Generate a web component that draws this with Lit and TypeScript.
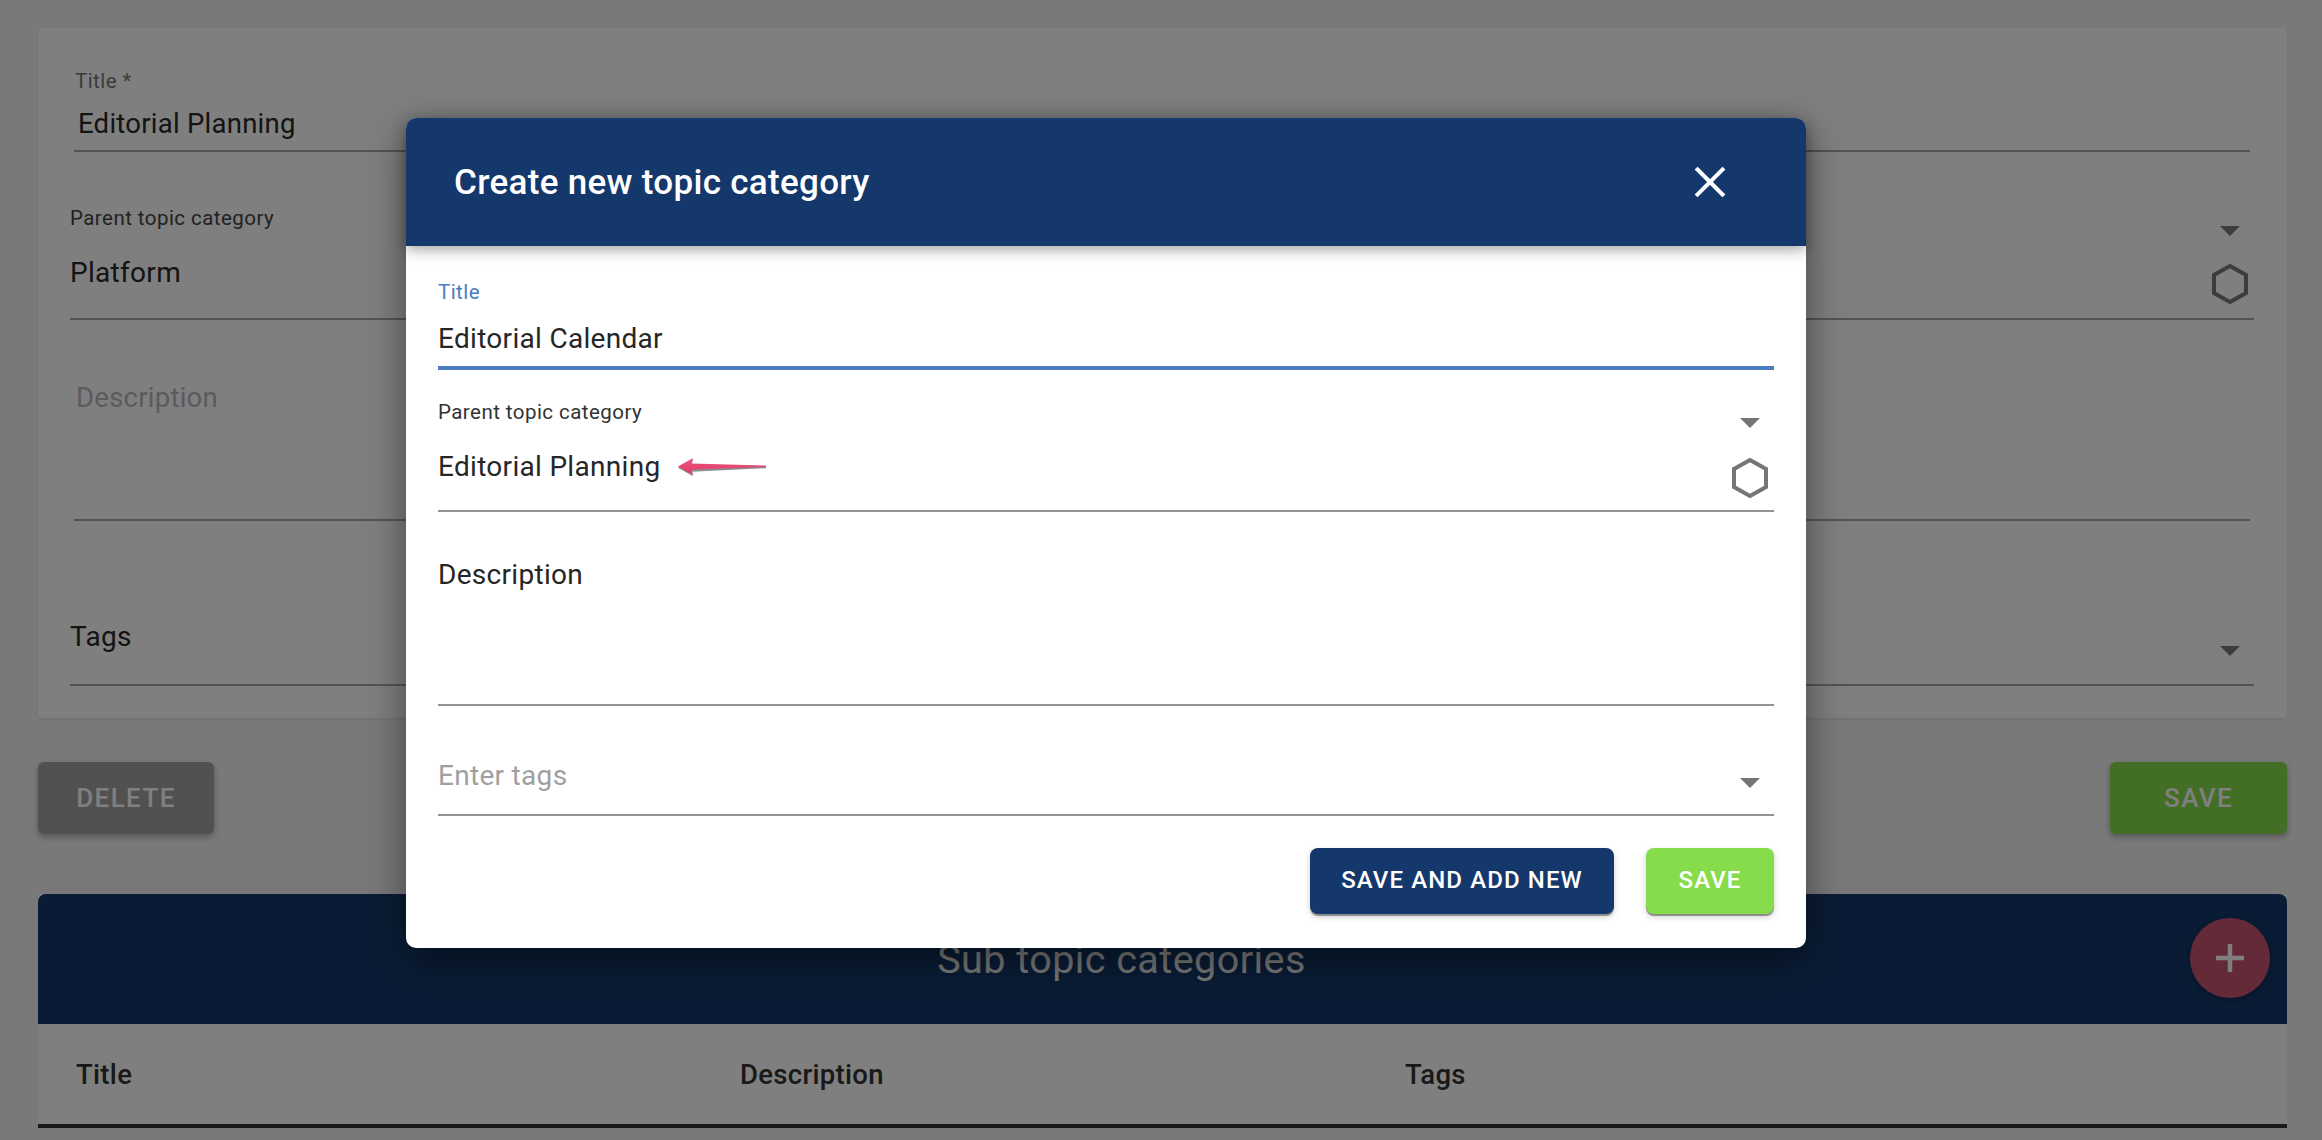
import { LitElement, html, css } from "lit";
import { customElement } from "lit/decorators.js";

const tri = () => html`<svg class="tri" viewBox="0 0 20 10"><path d="M0 0H20L10 10Z" fill="currentColor"/></svg>`;
const hex = () => html`<svg class="hex" viewBox="0 0 36 40"><path d="M18 2 L34 11 V29 L18 38 L2 29 V11 Z" fill="none" stroke="currentColor" stroke-width="4"/></svg>`;

@customElement("app-root")
export class AppRoot extends LitElement {
  static styles = css`
    :host { display: block; font-family: Roboto, "Liberation Sans", sans-serif; }
    * { box-sizing: border-box; }
    .page { position: relative; width: 2322px; height: 1140px; overflow: hidden; background: #f3f3f3; padding: 28px 35px 0 38px; }
    .paper { height: 690px; background: #fff; border-radius: 4px; box-shadow: 0 1px 3px rgba(0,0,0,.1); display: flex; flex-direction: column; }
    .bf { border-bottom: 2px solid #a8a8a8; display: flex; color: #282828; }
    .bf.a { margin: 0 37px 0 36px; }
    .bf.b { margin: 0 33px 0 32px; }
    .bf .grow, .mf .grow { flex: 1; min-width: 0; }
    .icons { width: 36px; display: flex; flex-direction: column; align-items: center; }
    .tri { width: 20px; height: 10px; display: block; }
    .hex { width: 36px; height: 40px; display: block; }
    .val { font-size: 28px; line-height: 36px; letter-spacing: .3px; white-space: nowrap; }
    .lab { font-size: 20.5px; line-height: 28px; letter-spacing: .45px; white-space: nowrap; }

    .b1 { height: 124px; padding-top: 39px; }
    .b1 .lab { color: #777; margin-left: 1px; }
    .b1 .val { margin: 11px 0 0 4px; font-size: 27.5px; letter-spacing: .25px; }
    .b2 { height: 169px; margin-top: -1px !important; }
    .b2 .lab { margin-top: 53px; color: #444; }
    .b2 .val { margin-top: 23px; }
    .b2 .icons { margin: 75px 6px 0 0; color: #7b7b7b; }
    .b2 .hex { margin-top: 28px; }
    .b3 { height: 201px; }
    .b3 .val { margin: 60px 0 0 2px; color: #b6b6b6; font-size: 27.5px; letter-spacing: .25px; }
    .b4 { height: 165px; }
    .b4 .val { margin-top: 98px; }
    .b4 .icons { margin: 125px 6px 0 0; color: #7b7b7b; }

    .actions { display: flex; justify-content: space-between; margin-top: 44px; }
    .btn { border: 0; font: 500 26px/1 Roboto, sans-serif; letter-spacing: 1.4px; border-radius: 6px; display: flex; align-items: center; justify-content: center; box-shadow: 0 3px 6px rgba(0,0,0,.3); }
    .del { width: 176px; height: 72px; background: #a3a3a3; color: #fff; }
    .sv { width: 177px; height: 72px; background: #86dc4a; color: #fff; }
    .table { margin-top: 60px; background: #fff; }
    .band { position: relative; height: 130px; background: #14386b; border-radius: 8px 8px 0 0; display: flex; align-items: center; justify-content: center; padding-right: 82px; color: #eee; font-size: 39.5px; font-weight: 400; letter-spacing: .45px; }
    .fab { position: absolute; right: 17px; top: 24px; width: 80px; height: 80px; border-radius: 50%; background: #cb5570; box-shadow: 0 3px 8px rgba(0,0,0,.3); display: flex; align-items: center; justify-content: center; }
    .fab svg { width: 28px; height: 28px; display: block; }
    .thead { height: 104px; border-bottom: 4px solid #303030; display: grid; grid-template-columns: 664px 665px 1fr; padding-left: 38px; align-items: center; font-size: 27.5px; font-weight: 500; color: #333; letter-spacing: .3px; padding-top: 1px; }

    .scrim { position: absolute; inset: 0; background: rgba(0,0,0,.5); }
    .modal { position: absolute; left: 406px; top: 118px; width: 1400px; height: 830px; background: #fff; border-radius: 10px; box-shadow: 0 12px 40px rgba(0,0,0,.45); display: flex; flex-direction: column; }
    .mhead { height: 128px; background: #14386b; border-radius: 10px 10px 0 0; box-shadow: 0 4px 14px rgba(0,0,0,.35); display: flex; align-items: center; justify-content: space-between; padding: 0 72px 0 48px; color: #fff; position: relative; }
    .mhead h2 { margin: 0; font-size: 35px; font-weight: 500; letter-spacing: .3px; }
    .x { width: 48px; height: 48px; display: block; }
    .mbody { padding: 0 32px; display: flex; flex-direction: column; flex: 1; }
    .mf { display: flex; border-bottom: 2px solid #949494; color: #262626; }
    .m1 { height: 124px; border-bottom: 4px solid #4a7dbf; padding-top: 32px; }
    .m1 .lab { color: #4a7dbf; }
    .m1 .val { margin-top: 15px; }
    .m2 { height: 142px; }
    .m2 .lab { margin-top: 28px; color: #333; }
    .m2 .val { margin-top: 23px; display: flex; align-items: center; }
    .m2 .icons { margin: 48px 6px 0 0; color: #757575; }
    .m2 .hex { margin-top: 30px; }
    .arrow { width: 92px; height: 24px; margin-left: 16px; display: block; }
    .m3 { height: 194px; }
    .m3 .val { margin-top: 45px; }
    .m4 { height: 110px; }
    .m4 .val { margin-top: 52px; color: #a0a0a0; }
    .m4 .icons { margin: 72px 6px 0 0; color: #757575; }
    .mact { display: flex; justify-content: flex-end; gap: 32px; margin-top: 32px; }
    .mact .btn { height: 66px; font-size: 24px; letter-spacing: 1.1px; border-radius: 8px; box-shadow: 0 2px 0 rgba(0,0,0,.35), 0 3px 6px rgba(0,0,0,.2); padding-bottom: 2px; }
    .add { width: 304px; background: #14386b; color: #fff; }
    .ms { width: 128px; background: #86dc4a; color: #fff; }
  `;

  render() {
    return html`
      <div class="page">
        <div class="paper">
          <div class="bf a b1"><div class="grow"><div class="lab">Title *</div><div class="val">Editorial Planning</div></div></div>
          <div class="bf b b2"><div class="grow"><div class="lab">Parent topic category</div><div class="val">Platform</div></div><div class="icons">${tri()}${hex()}</div></div>
          <div class="bf a b3"><div class="grow"><div class="val">Description</div></div></div>
          <div class="bf b b4"><div class="grow"><div class="val">Tags</div></div><div class="icons">${tri()}</div></div>
        </div>
        <div class="actions"><div class="btn del">DELETE</div><div class="btn sv">SAVE</div></div>
        <div class="table">
          <div class="band"><span>Sub topic categories</span>
            <div class="fab"><svg viewBox="0 0 28 28"><path d="M14 0V28M0 14H28" stroke="#fff" stroke-width="4.4" fill="none"/></svg></div>
          </div>
          <div class="thead"><div>Title</div><div>Description</div><div>Tags</div></div>
        </div>
        <div class="scrim"></div>
        <div class="modal">
          <div class="mhead"><h2>Create new topic category</h2>
            <svg class="x" viewBox="0 0 48 48"><path d="M11.5 11.5L36.5 36.5M36.5 11.5L11.5 36.5" stroke="#fff" stroke-width="4" stroke-linecap="square" fill="none"/></svg>
          </div>
          <div class="mbody">
            <div class="mf m1"><div class="grow"><div class="lab">Title</div><div class="val">Editorial Calendar</div></div></div>
            <div class="mf m2"><div class="grow"><div class="lab">Parent topic category</div>
              <div class="val">Editorial Planning
                <svg class="arrow" viewBox="0 0 92 24"><defs><linearGradient id="g" x1="0" y1="0" x2="0" y2="1"><stop offset="0" stop-color="#ee5580"/><stop offset="1" stop-color="#dd3a66"/></linearGradient></defs>
                  <path d="M2 11.5 L17 3 L15.5 8.5 L90 10.5 V12 L15.5 15.5 L17 20 Z" fill="#8d8d8d" transform="translate(0,1.2)"/>
                  <path d="M2 11.5 L17 3 L15.5 8.5 L90 10.5 V12 L15.5 14.5 L17 20 Z" fill="url(#g)"/></svg>
              </div></div><div class="icons">${tri()}${hex()}</div></div>
            <div class="mf m3"><div class="grow"><div class="val">Description</div></div></div>
            <div class="mf m4"><div class="grow"><div class="val">Enter tags</div></div><div class="icons">${tri()}</div></div>
            <div class="mact"><div class="btn add">SAVE AND ADD NEW</div><div class="btn ms">SAVE</div></div>
          </div>
        </div>
      </div>
    `;
  }
}
